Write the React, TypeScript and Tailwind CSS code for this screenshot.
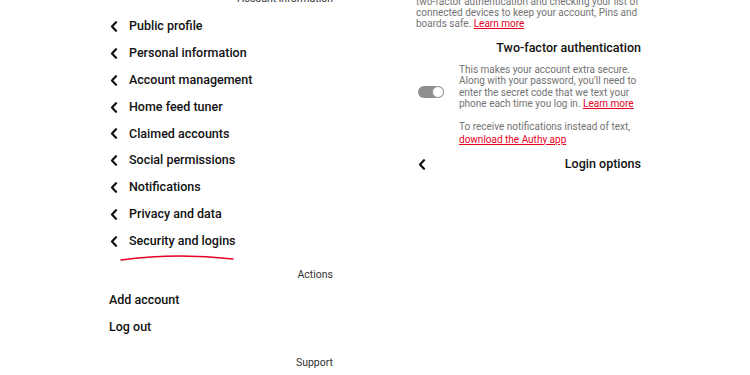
import { ReactNode } from "react";

const settings = [
  "Public profile",
  "Personal information",
  "Account management",
  "Home feed tuner",
  "Claimed accounts",
  "Social permissions",
  "Notifications",
  "Privacy and data",
  "Security and logins",
];

function Chevron() {
  return (
    <svg width="8" height="11" viewBox="0 0 8 11" className="shrink-0">
      <path d="M6 1.2 L2 5.5 L6 9.8" fill="none" stroke="#111" strokeWidth="2.2" strokeLinecap="round" strokeLinejoin="round" />
    </svg>
  );
}

function RedLink({ children }: { children: ReactNode }) {
  return <span className="text-[#e60023] underline underline-offset-1">{children}</span>;
}

function SectionLabel({ children, className = "" }: { children: ReactNode; className?: string }) {
  return <div className={`h-[14px] text-right text-[10.5px] leading-[14px] text-[#333] ${className}`}>{children}</div>;
}

export default function App() {
  return (
    <div className="h-[375px] w-[750px] overflow-hidden bg-white font-['Roboto',sans-serif] text-[#111]">
      <div className="flex">
        {/* settings list */}
        <div className="ml-[109px] w-[224px]">
          <SectionLabel className="-mt-[8px]">Account information</SectionLabel>
          <div className="mt-[7px]">
            {settings.map((item) => (
              <div key={item} className="flex h-[26.875px] items-center">
                <div className="w-[20px] pl-[1px]">
                  <Chevron />
                </div>
                <span className="text-[12.5px] font-medium">{item}</span>
              </div>
            ))}
          </div>
          <svg width="120" height="7" viewBox="0 0 120 7" className="ml-[11px] block">
            <path d="M1 5 C 30 1, 70 -1, 113 4" fill="none" stroke="#e60023" strokeWidth="1.4" strokeLinecap="round" />
          </svg>
          <SectionLabel className="mt-[6px]">Actions</SectionLabel>
          <div className="mt-[5px]">
            <div className="flex h-[27px] items-center text-[12.5px] font-medium">Add account</div>
            <div className="flex h-[27px] items-center text-[12.5px] font-medium">Log out</div>
          </div>
          <SectionLabel className="mt-[15px]">Support</SectionLabel>
        </div>

        {/* security detail */}
        <div className="ml-[83px] w-[226px] whitespace-nowrap">
          <div className="-mt-[4px] text-[10px] leading-[11px] text-[#737373]">
            <div>two-factor authentication and checking your list of</div>
            <div>connected devices to keep your account, Pins and</div>
            <div>
              boards safe. <RedLink>Learn more</RedLink>
            </div>
          </div>
          <div className="mt-[11px] h-[16px] pr-[1px] text-right text-[12.5px] font-medium leading-[16px]">
            Two-factor authentication
          </div>
          <div className="mt-[8px] flex items-start">
            <div className="ml-[2px] mt-[22px] flex h-[12px] w-[26px] items-center justify-end rounded-full bg-[#8e8e8e]">
              <div className="h-[12px] w-[12px] rounded-full border border-[#9a9a9a] bg-white" />
            </div>
            <div className="ml-[15px] text-[10px] leading-[11.4px] text-[#737373]">
              <div>This makes your account extra secure.</div>
              <div>Along with your password, you'll need to</div>
              <div>enter the secret code that we text your</div>
              <div>
                phone each time you log in. <RedLink>Learn more</RedLink>
              </div>
            </div>
          </div>
          <div className="ml-[43px] mt-[11.5px] text-[10px] leading-[12.5px] text-[#737373]">
            <div>To receive notifications instead of text,</div>
            <div>
              <RedLink>download the Authy app</RedLink>
            </div>
          </div>
          <div className="mt-[8.5px] flex h-[20px] items-center justify-between pl-[2px] pr-[1px]">
            <Chevron />
            <span className="text-[12.5px] font-medium">Login options</span>
          </div>
        </div>
      </div>
    </div>
  );
}
